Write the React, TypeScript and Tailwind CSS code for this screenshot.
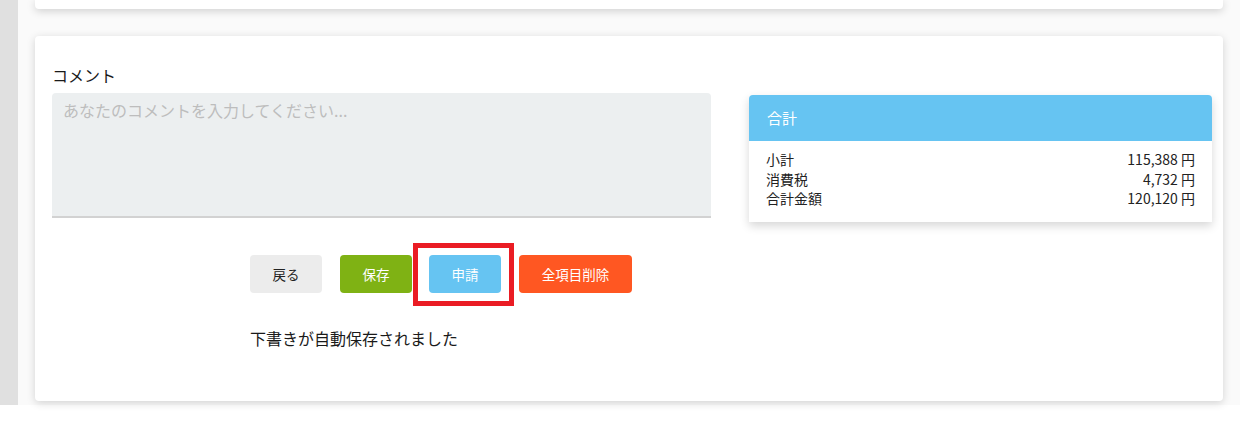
import React from "react";

const font = { fontFamily: '"Noto Sans CJK JP", "Noto Sans", sans-serif' };

export default function App() {
  return (
    <div className="w-[1258px] h-[434px] bg-white overflow-hidden" style={font}>
      <div className="flex h-[405px]">
        <div className="w-[18px] shrink-0 bg-[#e0e0e0]" />
        <div className="w-[1222px] shrink-0 bg-[#fafafa] pl-[17px] pr-[17px] flex flex-col">
          <div className="h-[9px] bg-white rounded-b-[4px] shadow-[0_2px_8px_rgba(0,0,0,0.18)]" />
          <div className="mt-[27px] h-[365px] bg-white rounded-[4px] shadow-[0_2px_8px_rgba(0,0,0,0.16)] pl-[17px] pt-[28px] flex flex-col">
            <div className="flex items-start">
              <div className="w-[659px] shrink-0 flex flex-col">
                <div className="text-[16px] leading-[20px] text-[#1a1a1a] h-[20px] mt-[1px]">コメント</div>
                <textarea
                  placeholder="あなたのコメントを入力してください..."
                  className="mt-[8px] h-[125px] w-full resize-none bg-[#eceff0] rounded-t-[4px] border-b-2 border-[#d2d2d2] px-[11px] py-[6px] text-[16px] leading-[22px] text-[#333] placeholder:text-[#bdbdbd] outline-none"
                  style={font}
                />
              </div>
              <div className="ml-[38px] mt-[13px] mb-[-18px] w-[477px] h-[159px] bg-white pt-[18px]">
                <div className="w-[463px] rounded-t-[4px] shadow-[0_4px_10px_rgba(0,0,0,0.16)]">
                  <div className="h-[46px] bg-[#66c4f2] rounded-t-[4px] flex items-center px-[18px] text-[15px] text-white">
                    合計
                  </div>
                  <div className="bg-white px-[17px] pt-[9px] pb-[13px] text-[14px] leading-[19.5px] text-[#222]">
                    <div className="flex justify-between"><span>小計</span><span>115,388 円</span></div>
                    <div className="flex justify-between"><span>消費税</span><span>4,732 円</span></div>
                    <div className="flex justify-between"><span>合計金額</span><span>120,120 円</span></div>
                  </div>
                </div>
              </div>
            </div>
            <div className="ml-[198px] mt-[37px] flex items-center text-[13.5px]">
              <button className="w-[72px] h-[38px] rounded-[4px] bg-[#ececec] text-[#222]" style={font}>戻る</button>
              <button className="ml-[18px] w-[72px] h-[38px] rounded-[4px] bg-[#7fb214] text-white" style={font}>保存</button>
              <div className="relative ml-[17px]">
                <button className="w-[72px] h-[38px] rounded-[4px] bg-[#66c4f2] text-white block" style={font}>申請</button>
                <div className="absolute left-[-16px] top-[-12px] w-[101px] h-[63px] border-[5px] border-[#ea1c24] pointer-events-none" />
              </div>
              <button className="ml-[18px] w-[113px] h-[38px] rounded-[4px] bg-[#ff5722] text-white" style={font}>全項目削除</button>
            </div>
            <div className="ml-[198px] mt-[34px] text-[16px] leading-[22px] text-[#1a1a1a]">下書きが自動保存されました</div>
          </div>
        </div>
      </div>
    </div>
  );
}
